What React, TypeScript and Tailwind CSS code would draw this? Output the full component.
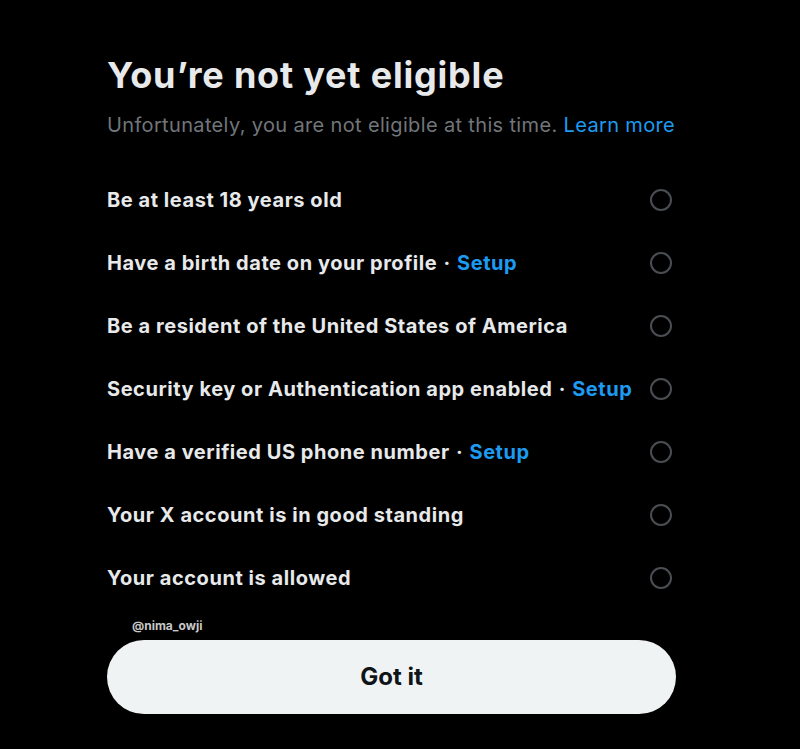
import React from "react";

const items: { text: string; setup?: boolean }[] = [
  { text: "Be at least 18 years old" },
  { text: "Have a birth date on your profile", setup: true },
  { text: "Be a resident of the United States of America" },
  { text: "Security key or Authentication app enabled", setup: true },
  { text: "Have a verified US phone number", setup: true },
  { text: "Your X account is in good standing" },
  { text: "Your account is allowed" },
];

export default function App() {
  return (
    <div
      className="w-[800px] h-[749px] bg-black text-[#e7e9ea] overflow-hidden"
      style={{ fontFamily: "Inter, 'Noto Sans', sans-serif" }}
    >
      <div className="ml-[107px] w-[568px] pt-[53px]">
        <h1 className="text-[36px] leading-[44px] font-bold text-[#e7e9ea] tracking-[0.8px]">
          You’re not yet eligible
        </h1>
        <p className="mt-[16px] text-[20px] leading-[24px] text-[#71767b] tracking-[0.35px] whitespace-nowrap">
          Unfortunately, you are not eligible at this time.{" "}
          <span className="text-[#1d9bf0]">Learn more</span>
        </p>
        <div className="mt-[31px] flex flex-col">
          {items.map((it) => (
            <div key={it.text} className="h-[63px] flex items-center justify-between">
              <div className="text-[20px] font-bold leading-[24px] tracking-[0.55px] whitespace-nowrap">
                {it.text}
                {it.setup && (
                  <>
                    <span className="mx-[1px]"> · </span>
                    <span className="text-[#1d9bf0]">Setup</span>
                  </>
                )}
              </div>
              <div className="w-[22px] h-[22px] rounded-full border-2 border-[#4a4e52] mr-[3px] shrink-0" />
            </div>
          ))}
        </div>
        <div className="relative">
          <div className="absolute left-[25px] top-[10px] text-[12px] leading-[14px] font-bold text-[#c8c8c8]">@nima_owji</div>
        </div>
        <button className="mt-[31px] w-[569px] h-[74px] rounded-full bg-[#eff3f4] text-[#0f1419] text-[24px] font-bold">
          Got it
        </button>
      </div>
    </div>
  );
}
